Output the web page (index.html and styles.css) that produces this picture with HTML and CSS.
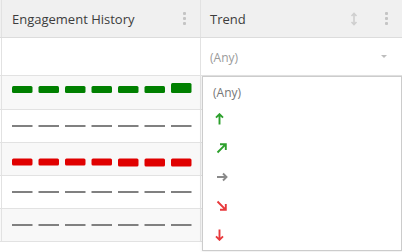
FILE: index.html
```html
<!DOCTYPE html>
<html>
<head>
<meta charset="utf-8">
<link rel="stylesheet" href="styles.css">
</head>
<body>
<div class="grid">
  <div class="row head">
    <div class="cell c1"><span class="title">Engagement History</span><span class="dots"><i></i><i></i><i></i></span></div>
    <div class="cell c2"><span class="title">Trend</span>
      <svg class="sort" width="8" height="14" viewBox="0 0 8 14"><path d="M4 1.5V12.5M1.5 4L4 1.5L6.5 4M1.5 10L4 12.5L6.5 10" fill="none" stroke="#cfcfcf" stroke-width="1.6"/></svg>
      <span class="dots"><i></i><i></i><i></i></span></div>
  </div>
  <div class="row filter">
    <div class="cell c1"></div>
    <div class="cell c2"><span class="any">(Any)</span><span class="caret"></span></div>
  </div>
  <div class="row body odd first">
    <div class="cell c1">
      <svg class="spark" width="180" height="32" viewBox="0 0 180 32">
        <g fill="#008000">
          <rect x="0" y="9" width="20.5" height="7" rx="1.5"/>
          <rect x="26.5" y="9" width="20.5" height="7" rx="1.5"/>
          <rect x="53" y="9" width="20.5" height="7" rx="1.5"/>
          <rect x="79.5" y="9" width="20.5" height="7" rx="1.5"/>
          <rect x="106" y="9" width="20.5" height="7" rx="1.5"/>
          <rect x="132.5" y="9" width="20.5" height="7" rx="1.5"/>
          <rect x="159" y="6" width="20.5" height="10" rx="1.5"/>
        </g>
      </svg>
    </div>
    <div class="cell c2"></div>
  </div>
  <div class="row body">
    <div class="cell c1">
      <svg class="spark" width="180" height="32" viewBox="0 0 180 32">
        <g fill="#808080">
          <rect x="0" y="15" width="20.5" height="2"/>
          <rect x="26.5" y="15" width="20.5" height="2"/>
          <rect x="53" y="15" width="20.5" height="2"/>
          <rect x="79.5" y="15" width="20.5" height="2"/>
          <rect x="106" y="15" width="20.5" height="2"/>
          <rect x="132.5" y="15" width="20.5" height="2"/>
          <rect x="159" y="15" width="20.5" height="2"/>
        </g>
      </svg>
    </div>
    <div class="cell c2"></div>
  </div>
  <div class="row body odd">
    <div class="cell c1">
      <svg class="spark" width="180" height="32" viewBox="0 0 180 32">
        <g fill="#e00000">
          <rect x="0" y="15.5" width="20.5" height="7" rx="1.5"/>
          <rect x="26.5" y="15.5" width="20.5" height="7" rx="1.5"/>
          <rect x="53" y="15.5" width="20.5" height="7" rx="1.5"/>
          <rect x="79.5" y="15.5" width="20.5" height="7" rx="1.5"/>
          <rect x="106" y="15.5" width="20.5" height="8" rx="1.5"/>
          <rect x="132.5" y="15.5" width="20.5" height="8" rx="1.5"/>
          <rect x="159" y="15.5" width="20.5" height="8" rx="1.5"/>
        </g>
      </svg>
    </div>
    <div class="cell c2"></div>
  </div>
  <div class="row body">
    <div class="cell c1">
      <svg class="spark" width="180" height="32" viewBox="0 0 180 32">
        <g fill="#808080">
          <rect x="0" y="15" width="20.5" height="2"/>
          <rect x="26.5" y="15" width="20.5" height="2"/>
          <rect x="53" y="15" width="20.5" height="2"/>
          <rect x="79.5" y="15" width="20.5" height="2"/>
          <rect x="106" y="15" width="20.5" height="2"/>
          <rect x="132.5" y="15" width="20.5" height="2"/>
          <rect x="159" y="15" width="20.5" height="2"/>
        </g>
      </svg>
    </div>
    <div class="cell c2"></div>
  </div>
  <div class="row body odd">
    <div class="cell c1">
      <svg class="spark" width="180" height="32" viewBox="0 0 180 32">
        <g fill="#808080">
          <rect x="0" y="15" width="20.5" height="2"/>
          <rect x="26.5" y="15" width="20.5" height="2"/>
          <rect x="53" y="15" width="20.5" height="2"/>
          <rect x="79.5" y="15" width="20.5" height="2"/>
          <rect x="106" y="15" width="20.5" height="2"/>
          <rect x="132.5" y="15" width="20.5" height="2"/>
          <rect x="159" y="15" width="20.5" height="2"/>
        </g>
      </svg>
    </div>
    <div class="cell c2"></div>
  </div>

  <div class="dropdown">
    <div class="item"><span class="opt">(Any)</span></div>
    <div class="item"><svg class="arrow" width="16" height="12" viewBox="0 0 16 12"><path d="M6.5 11.5V1.2M3 4.7L6.5 1.2L10 4.7" fill="none" stroke="#2ca02c" stroke-width="1.9"/></svg></div>
    <div class="item"><svg class="arrow" width="16" height="12" viewBox="0 0 16 12"><path d="M4.5 10.5L12.8 2.2M7 2.2H12.8V8" fill="none" stroke="#2ca02c" stroke-width="1.9"/></svg></div>
    <div class="item"><svg class="arrow" width="16" height="12" viewBox="0 0 16 12"><path d="M4 6H13.5M10 2.5L13.5 6L10 9.5" fill="none" stroke="#8a8a8a" stroke-width="1.9"/></svg></div>
    <div class="item"><svg class="arrow" width="16" height="12" viewBox="0 0 16 12"><path d="M4.5 1.5L12.8 9.8M12.8 4V9.8H7" fill="none" stroke="#e8393c" stroke-width="1.9"/></svg></div>
    <div class="item"><svg class="arrow" width="16" height="12" viewBox="0 0 16 12"><path d="M6.5 0.5V10.8M3 7.3L6.5 10.8L10 7.3" fill="none" stroke="#e8393c" stroke-width="1.9"/></svg></div>
  </div>
</div>
</body>
</html>
```

FILE: styles.css
```css
html, body {
  margin: 0;
  padding: 0;
  background: #fff;
}
body {
  min-height: 252px;
  font-family: "Open Sans", "Liberation Sans", sans-serif;
  font-size: 13px;
  color: #333;
}
.grid {
  position: relative;
  width: 402px;
  min-height: 252px;
}
.row {
  display: flex;
  border-bottom: 1px solid #e2e2e2;
}
.cell {
  box-sizing: border-box;
  display: flex;
  align-items: center;
}
.c1 {
  width: 200px;
  margin-left: 1px;
  border-left: 1px solid #e2e2e2;
  border-right: 1px solid #e2e2e2;
  padding-left: 10px;
}
.c2 {
  flex: 1;
  padding-left: 9px;
}
.head {
  height: 38px;
  box-sizing: border-box;
  background: #f0f0f0;
  border-bottom-color: #dcdcdc;
}
.head .c2 {
  padding-right: 14px;
}
.head .c1 {
  padding-right: 14px;
}
.title {
  flex: 1;
  color: #3d3d3d;
  font-size: 13px;
}
.dots {
  display: flex;
  flex-direction: column;
  gap: 1.7px;
  width: 3px;
}
.dots i {
  display: block;
  width: 3px;
  height: 3px;
  border-radius: 1px;
  background: #c4c4c4;
}
.sort {
  margin-right: 27px;
}
.filter {
  height: 38px;
  box-sizing: border-box;
}
.filter .c2 {
  padding-right: 15px;
}
.any {
  flex: 1;
  color: #9a9a9a;
  font-size: 12px;
  padding-top: 2px;
}
.caret {
  width: 0;
  height: 0;
  border-left: 3px solid transparent;
  border-right: 3px solid transparent;
  border-top: 3px solid #bdbdbd;
}
.body {
  height: 33px;
  box-sizing: border-box;
}
.body.first {
  height: 34px;
}
.odd {
  background: #f8f8f8;
}
.spark {
  display: block;
}
.dropdown {
  position: absolute;
  left: 202px;
  top: 76px;
  width: 200px;
  height: 175px;
  box-sizing: border-box;
  border: 1px solid #cccccc;
  background: #fff;
  box-shadow: 0 1px 3px rgba(0,0,0,0.08);
  overflow: hidden;
}
.item {
  height: 29px;
  display: flex;
  align-items: center;
  padding-left: 10px;
}
.opt {
  color: #777;
  font-size: 12px;
  padding-top: 1px;
}
.arrow {
  display: block;
  margin-bottom: 4px;
}
```
